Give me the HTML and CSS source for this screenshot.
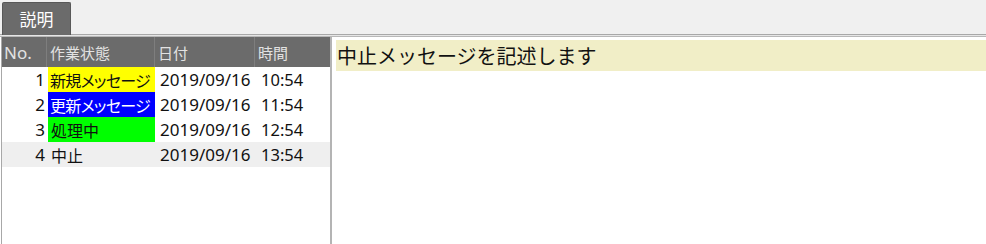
FILE: index.html
```html
<!DOCTYPE html>
<html lang="ja">
<head>
<meta charset="utf-8">
<link rel="stylesheet" href="styles.css">
</head>
<body>
<div class="tabbar">
  <div class="tab">説明</div>
</div>
<div class="rule"></div>
<div class="main">
  <div class="list">
    <div class="grid">
      <div class="hd c-no">No.</div>
      <div class="hd">作業状態</div>
      <div class="hd">日付</div>
      <div class="hd last">時間</div>

      <div class="cell c-no">1</div>
      <div class="cell st fit yellow">新規メッセージ</div>
      <div class="cell dt">2019/09/16</div>
      <div class="cell tm">10:54</div>

      <div class="cell c-no">2</div>
      <div class="cell st fit blue">更新メッセージ</div>
      <div class="cell dt">2019/09/16</div>
      <div class="cell tm">11:54</div>

      <div class="cell c-no">3</div>
      <div class="cell st green">処理中</div>
      <div class="cell dt">2019/09/16</div>
      <div class="cell tm">12:54</div>

      <div class="cell c-no sel">4</div>
      <div class="cell st sel">中止</div>
      <div class="cell dt sel">2019/09/16</div>
      <div class="cell tm sel">13:54</div>
    </div>
  </div>
  <div class="detail">
    <div class="message">中止メッセージを記述します</div>
  </div>
</div>
</body>
</html>
```

FILE: styles.css
```css
html, body {
  margin: 0;
  padding: 0;
  background: #ffffff;
  font-family: "Noto Sans CJK JP", "Noto Sans", sans-serif;
  overflow: hidden;
}

.tabbar {
  height: 34px;
  background: #f0f0f0;
  padding: 2px 0 0 2px;
  box-sizing: border-box;
  display: flex;
}

.tab {
  width: 69px;
  height: 33px;
  box-sizing: border-box;
  background: #6b6b6b;
  border: 1px solid #585858;
  border-bottom: none;
  border-radius: 2px 2px 0 0;
  color: #ffffff;
  font-size: 17px;
  line-height: 31px;
  text-align: center;
  position: relative;
  z-index: 1;
}

.rule {
  height: 3px;
  box-sizing: border-box;
  border-top: 1px solid #a8a8a8;
  border-bottom: 1px solid #b8b8b8;
  background: #e6e6e6;
}

.main {
  display: flex;
  height: 207px;
}

.list {
  margin-left: 1px;
  width: 328px;
  border-left: 1px solid #a8a8a8;
  border-right: 2px solid #b4b4b4;
  background: #ffffff;
}

.grid {
  display: grid;
  grid-template-columns: 45px 108px 100px 75px;
  grid-auto-rows: 25px;
  grid-template-rows: 30px;
}

.hd {
  background: #6b6b6b;
  color: #e2e2e2;
  font-size: 15px;
  line-height: 31px;
  padding-left: 3px;
  border-right: 1px solid #7e7e7e;
  box-sizing: border-box;
  height: 30px;
}

.hd.c-no {
  padding-left: 2px;
  font-family: "Noto Sans", sans-serif;
  font-size: 17px;
}

.hd.last {
  border-right: none;
}

.cell {
  font-size: 16px;
  line-height: 24px;
  padding-top: 1px;
  color: #111111;
  white-space: nowrap;
  box-sizing: border-box;
}

.cell.c-no {
  text-align: right;
  padding-right: 2px;
  font-family: "Noto Sans", sans-serif;
  font-size: 17px;
}

.cell.st {
  padding-left: 3px;
  margin-left: 1px;
  overflow: hidden;
  font-feature-settings: "palt";
}

.cell.st.fit {
  padding-left: 2px;
  letter-spacing: -0.7px;
}

.cell.dt {
  padding-left: 5px;
  font-family: "Noto Sans", sans-serif;
  font-size: 17px;
}

.cell.tm {
  padding-left: 6px;
  font-family: "Noto Sans", sans-serif;
  font-size: 16.5px;
}

.yellow {
  background: #ffff00;
}

.blue {
  background: #0000ff;
  color: #ffffff;
}

.green {
  background: #00ff00;
}

.sel {
  background: #efefef;
}

.cell.st.sel {
  margin-left: 0;
  padding-left: 4px;
}

.detail {
  flex: 1;
  padding: 3px 0 0 4px;
}

.message {
  height: 31px;
  background: #f1eec7;
  font-size: 20px;
  line-height: 31px;
  color: #111111;
  padding-left: 1px;
}
```
